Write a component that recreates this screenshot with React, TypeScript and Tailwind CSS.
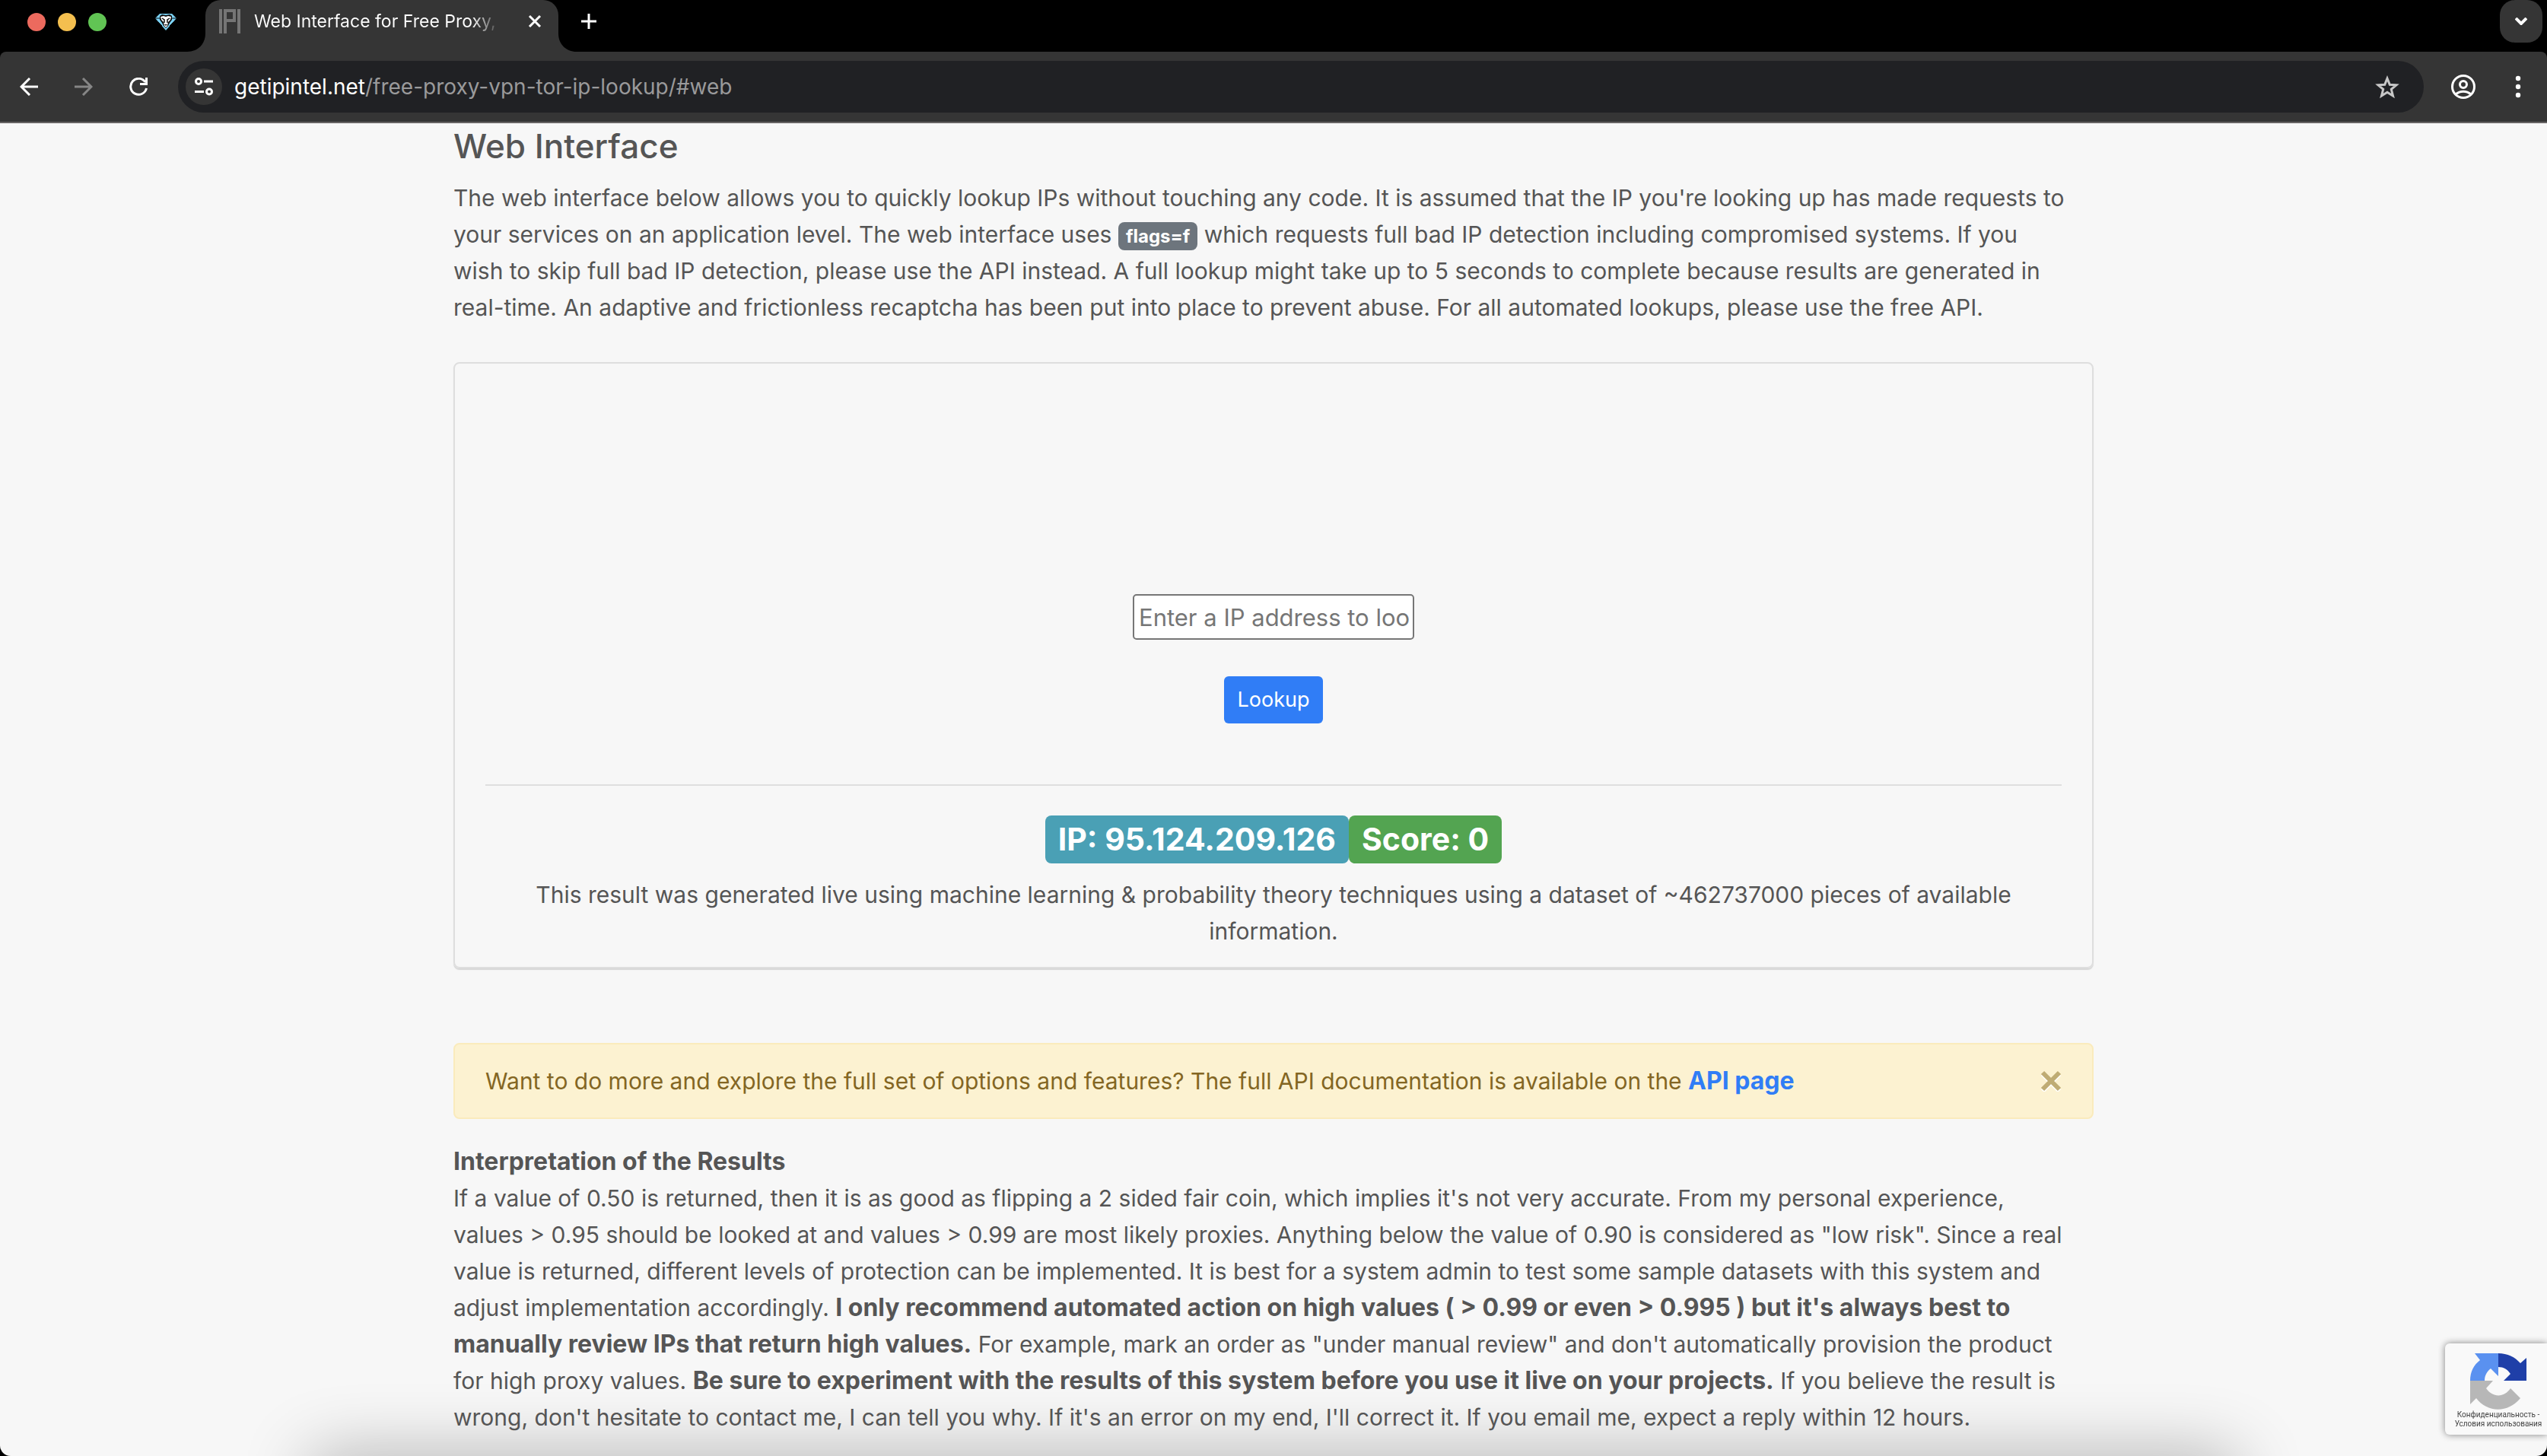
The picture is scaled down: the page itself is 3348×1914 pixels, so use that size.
import type { ReactNode } from 'react';

function LionIcon() {
  return (
    <svg viewBox="0 0 28 22" className="h-[22px] w-7" aria-hidden="true">
      <path d="M6 0h16l6 6-14 16L0 6z" fill="#7cd3f7" />
      <path d="M6 3l3-2 5 1 5-1 3 2v5l-3 4-2 4-3 3-3-3-2-4-3-4z" fill="#0b0b0b" />
      <path d="M7 4l4-1 3 1 3-1 4 1-1 4-3 3-1 5-2 2-2-2-1-5-3-3z" fill="#fff" />
      <path d="M9 6l3 2v4M19 6l-3 2v4" stroke="#0b0b0b" strokeWidth="1.500" fill="none" />
      <path d="M12 14h4l-2 2z" fill="#0b0b0b" />
      <path d="M0 6h6M22 6h6M4 11l5 5M24 11l-5 5" stroke="#0b0b0b" strokeWidth="1" />
    </svg>
  );
}

function SiteIcon() {
  return (
    <svg viewBox="0 0 28 32" className="h-8 w-7" fill="none" stroke="#757575" strokeWidth="4" aria-hidden="true">
      <path d="M2 0v32M26 0v32" />
      <path d="M8 32V2h12v13h-10" />
    </svg>
  );
}

function TabStrip() {
  return (
    <div className="flex h-[68px] items-start bg-black">
      <div className="flex h-[58px] items-center pl-9">
        <div className="flex gap-4">
          <span className="size-6 rounded-full bg-[#ec6a5e]" />
          <span className="size-6 rounded-full bg-[#f4bf4f]" />
          <span className="size-6 rounded-full bg-[#61c454]" />
        </div>
        <a href="#pinned" aria-label="Pinned tab" className="ml-16">
          <LionIcon />
        </a>
      </div>
      <div className="ml-3.5 flex h-[68px] items-end">
        <svg viewBox="0 0 24 24" className="size-6" aria-hidden="true">
          <path d="M24 0v24H0c14 0 24-10 24-24z" fill="#353535" />
        </svg>
        <div className="flex h-[68px] w-[464px] items-start rounded-t-[20px] bg-[#353535] px-[18px]">
          <div className="flex h-14 flex-1 items-center pr-1">
            <SiteIcon />
            <span className="ml-[18px] bg-linear-to-r from-white from-90% to-[#555] bg-clip-text text-[23px] leading-8 whitespace-nowrap text-transparent">
              Web Interface for Free Proxy,
            </span>
            <button type="button" aria-label="Close tab" className="ml-auto text-white">
              <svg viewBox="0 0 18 18" className="size-[18px]" stroke="currentColor" strokeWidth="3">
                <path d="M2 2l14 14M16 2L2 16" />
              </svg>
            </button>
          </div>
        </div>
        <svg viewBox="0 0 24 24" className="size-6" aria-hidden="true">
          <path d="M0 0v24h24C10 24 0 14 0 0z" fill="#353535" />
        </svg>
      </div>
      <button type="button" aria-label="New tab" className="ml-1.5 flex h-14 items-center text-white">
        <svg viewBox="0 0 20 20" className="size-5" stroke="currentColor" strokeWidth="3">
          <path d="M10 0v20M0 10h20" />
        </svg>
      </button>
      <button
        type="button"
        aria-label="Search tabs"
        className="mr-1.5 ml-auto flex size-14 items-center justify-center rounded-[20px] bg-[#353535] text-white"
      >
        <svg viewBox="0 0 16 10" className="h-2.5 w-4" fill="none" stroke="currentColor" strokeWidth="4">
          <path d="M1 1l7 7 7-7" />
        </svg>
      </button>
    </div>
  );
}

function NavButton({ label, className, children }: { label: string; className: string; children: ReactNode }) {
  return (
    <button type="button" aria-label={label} className={className}>
      <svg viewBox="0 0 24 24" className="size-6" fill="none" stroke="currentColor" strokeWidth="3">
        {children}
      </svg>
    </button>
  );
}

function Toolbar() {
  return (
    <div className="bg-black">
      <div className="flex h-[94px] items-center rounded-t-lg border-b-2 border-[#666464] bg-[#353535] pl-[26px]">
        <div className="flex gap-12">
          <NavButton label="Back" className="text-white">
            <path d="M24 12H2M13 1L2 12l11 11" />
          </NavButton>
          <NavButton label="Forward" className="text-[#868686]">
            <path d="M0 12h22M11 1l11 11-11 11" />
          </NavButton>
          <NavButton label="Reload" className="text-white">
            <path d="M21 6A10.500 10.500 0 1 0 22.500 14M22.500 0v8.500H14" />
          </NavButton>
        </div>
        <div className="ml-10 flex h-[68px] flex-1 items-center rounded-full bg-[#202124] pr-8 pl-2.5">
          <button
            type="button"
            aria-label="View site information"
            className="flex size-12 items-center justify-center rounded-full bg-[#353535] text-white"
          >
            <svg viewBox="0 0 24 24" className="size-6" fill="none" stroke="currentColor" strokeWidth="3">
              <circle cx="5" cy="5" r="3.500" />
              <path d="M12 5h12M0 18.500h12" />
              <circle cx="19" cy="18.500" r="3.500" />
            </svg>
          </button>
          <div className="ml-4 flex-1 text-[28px] leading-10 whitespace-nowrap text-[#9a9a9b]">
            <span className="text-white">getipintel.net</span>/free-proxy-vpn-tor-ip-lookup/#web
          </div>
          <button type="button" aria-label="Bookmark this tab" className="text-[#c7c7c7]">
            <svg viewBox="0 0 32 31" className="h-[31px] w-8" fill="none" stroke="currentColor" strokeWidth="3">
              <path d="M16 4l3.300 8.200 8.700.6-6.700 5.600 2.200 8.600-7.500-4.700-7.500 4.700 2.200-8.600L4 12.800l8.700-.6z" />
            </svg>
          </button>
        </div>
        <button type="button" aria-label="Profile" className="ml-9 text-white">
          <svg viewBox="0 0 32 32" className="size-8" fill="none" stroke="currentColor" strokeWidth="3">
            <circle cx="16" cy="16" r="14.500" />
            <circle cx="16" cy="13" r="4.500" />
            <path d="M6 26c6-5 14-5 20 0" />
          </svg>
        </button>
        <button type="button" aria-label="Menu" className="mr-[34px] ml-[52px] text-white">
          <svg viewBox="0 0 8 30" className="h-[30px] w-2" fill="currentColor">
            <circle cx="4" cy="4" r="3.200" />
            <circle cx="4" cy="15" r="3.200" />
            <circle cx="4" cy="26" r="3.200" />
          </svg>
        </button>
      </div>
    </div>
  );
}

function LookupCard() {
  return (
    <section className="mt-12 rounded-lg border-2 border-[#dedede] px-10 pb-[23px] text-center shadow-[0_2px_1px_#d6d6d6]">
      <form className="flex flex-col items-center pt-[303px]" onSubmit={(e) => e.preventDefault()}>
        <input
          type="text"
          aria-label="IP address"
          placeholder="Enter a IP address to loo"
          className="h-[60px] w-[370px] rounded-[5px] border-2 border-[#767676] bg-white pl-1.5 text-[31px] placeholder:text-[#767676]"
        />
        <button
          type="submit"
          className="mt-12 h-[62px] rounded-md bg-[#307df6] px-[18px] text-[27px] leading-10 text-white"
        >
          Lookup
        </button>
      </form>
      <hr className="mt-20 border-t-2 border-[#dfdfdf]" />
      <div className="mt-[39px] flex justify-center text-[41px] leading-[63px] font-bold text-white">
        <span className="rounded-lg bg-[#4aa0b5] px-[17px]">IP: 95.124.209.126</span>
        <span className="rounded-lg bg-[#53a451] px-[17px]">Score: 0</span>
      </div>
      <p className="mt-[17px]">
        This result was generated live using machine learning &amp; probability theory techniques using a dataset of
        ~462737000 pieces of available
        <br />
        information.
      </p>
    </section>
  );
}

function ApiNotice() {
  return (
    <div
      role="alert"
      className="mt-[98px] flex items-center justify-between rounded-lg border-2 border-[#faebbc] bg-[#fcf2d1] px-10 py-6 text-[#836623]"
    >
      <p>
        Want to do more and explore the full set of options and features? The full API documentation is available on
        the{' '}
        <a href="#api" className="text-[32px] leading-none font-bold text-[#307df6]">
          API page
        </a>
      </p>
      <button type="button" aria-label="Close" className="text-[#bfac74]">
        <svg viewBox="0 0 28 28" className="size-7" fill="none" strokeWidth="6">
          <path d="M3 5l22 22M25 5L3 27" stroke="#fff" />
          <path d="M3 3l22 22M25 3L3 25" stroke="currentColor" />
        </svg>
      </button>
    </div>
  );
}

function Strong({ children }: { children: ReactNode }) {
  return <b className="text-[32px] leading-none font-bold">{children}</b>;
}

function RecaptchaBadge() {
  return (
    <aside className="fixed right-0 bottom-7 flex h-[120px] w-[134px] flex-col items-center rounded-l-md bg-[#f9f9f9] pt-3 pl-1.5 shadow-[0_0_10px_#808080]">
      <svg viewBox="0 0 74 76" className="h-[76px] w-[74px]" aria-hidden="true">
        <path d="M37 1v30L27 21c-5 4-8 9-8 16H0C0 25 5 16 13 10L6 1z" fill="#5a91f0" />
        <path d="M37 1c12 0 22 5 29 13l8-7v30H44l9-9c-4-6-9-9-16-9z" fill="#1f3fa8" />
        <path d="M0 37h30l-9 10c9 13 24 12 32 0l13 13C49 81 21 78 8 60l-8 8z" fill="#b7b7b7" />
      </svg>
      <p className="text-center font-[Roboto,sans-serif] text-[10px] leading-3 whitespace-nowrap text-[#444]">
        Конфиденциальность -
        <br />
        Условия использования
      </p>
    </aside>
  );
}

export default function App() {
  return (
    <div className="bg-black">
      <div className="relative flex min-h-screen flex-col overflow-hidden rounded-b-[14px] bg-[#f7f7f7] font-[Inter,sans-serif]">
        <TabStrip />
        <Toolbar />

        {/* Shade along the bottom edge of the window */}
        <div className="pointer-events-none absolute inset-x-[430px] -bottom-15 h-10 shadow-[0_0_90px_20px_rgba(0,0,0,0.3)]" />

        <main className="relative mx-auto w-full max-w-[2156px] text-[30px] leading-[48px] text-[#555]">
          <h1 className="pt-[2px] text-[44px] leading-[56px] font-medium">Web Interface</h1>
          <p className="mt-4 whitespace-nowrap">
            The web interface below allows you to quickly lookup IPs without touching any code. It is assumed that the
            IP you're looking up has made requests to
            <br />
            your services on an application level. The web interface uses{' '}
            <code className="rounded-lg bg-[#6d757d] px-2.5 py-1 font-[Inter,sans-serif] text-[24px] leading-none font-bold text-white">
              flags=f
            </code>{' '}
            which requests full bad IP detection including compromised systems. If you
            <br />
            wish to skip full bad IP detection, please use the API instead. A full lookup might take up to 5 seconds to
            complete because results are generated in
            <br />
            real-time. An adaptive and frictionless recaptcha has been put into place to prevent abuse. For all
            automated lookups, please use the free API.
          </p>

          <LookupCard />
          <ApiNotice />

          <h2 className="mt-8 text-[32px] leading-[48px] font-bold">Interpretation of the Results</h2>
          <p className="whitespace-nowrap">
            If a value of 0.50 is returned, then it is as good as flipping a 2 sided fair coin, which implies it's not
            very accurate. From my personal experience,
            <br />
            values &gt; 0.95 should be looked at and values &gt; 0.99 are most likely proxies. Anything below the value
            of 0.90 is considered as "low risk". Since a real
            <br />
            value is returned, different levels of protection can be implemented. It is best for a system admin to test
            some sample datasets with this system and
            <br />
            adjust implementation accordingly.{' '}
            <Strong>
              I only recommend automated action on high values ( &gt; 0.99 or even &gt; 0.995 ) but it's always best to
              <br />
              manually review IPs that return high values.
            </Strong>{' '}
            For example, mark an order as "under manual review" and don't automatically provision the product
            <br />
            for high proxy values.{' '}
            <Strong>
              Be sure to experiment with the results of this system before you use it live on your projects.
            </Strong>{' '}
            If you believe the result is
            <br />
            wrong, don't hesitate to contact me, I can tell you why. If it's an error on my end, I'll correct it. If you
            email me, expect a reply within 12 hours.
          </p>
        </main>

        <RecaptchaBadge />
      </div>
    </div>
  );
}
